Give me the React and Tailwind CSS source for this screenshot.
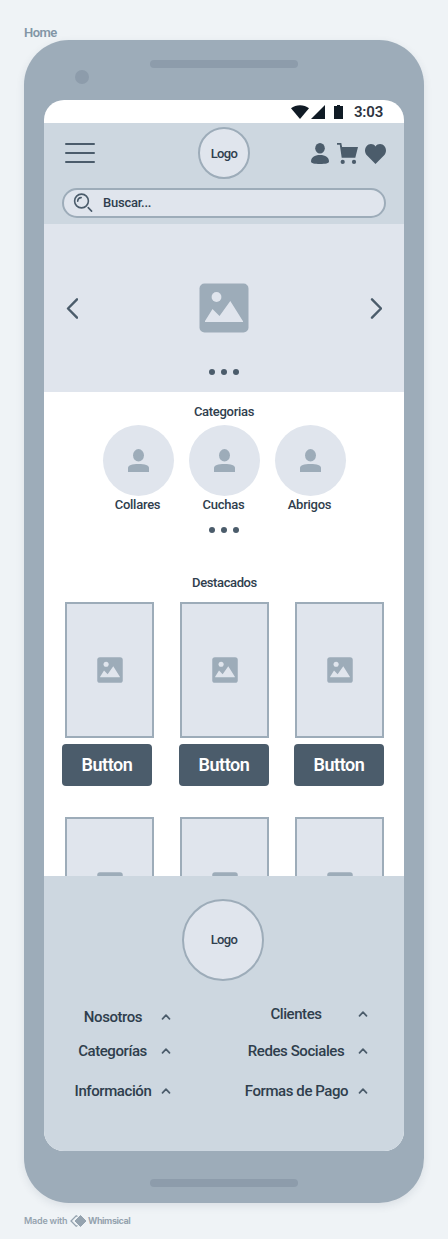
const PersonIcon = ({ className }) => (
  <svg className={className} viewBox="0 0 18 21" fill="currentColor" preserveAspectRatio="none">
    <ellipse cx="9" cy="5.2" rx="4.8" ry="5.2" />
    <path d="M0 18.500C0 14.500 3.500 12 9 12s9 2.500 9 6.500c0 1.800-3.500 2.500-9 2.500s-9-.7-9-2.500Z" />
  </svg>
);

const BustIcon = () => (
  <svg className="h-[23px] w-[21px] text-[#9dacb9]" viewBox="0 0 21 23" fill="currentColor">
    <ellipse cx="10.500" cy="6.300" rx="5.500" ry="6.200" />
    <path d="M0 23v-4c0-2.800 4-4 10.500-4S21 16.200 21 19v4Z" />
  </svg>
);

const CartIcon = () => (
  <svg className="h-[21px] w-[21px]" viewBox="0 0 21 21" fill="currentColor">
    <path d="M0 0h4.300l.8 4H21l-2.700 10.800H4.700L2.800 1.800H0Z" />
    <circle cx="5.700" cy="18.900" r="2.100" />
    <circle cx="17" cy="18.900" r="2.100" />
  </svg>
);

const HeartIcon = () => (
  <svg className="h-[20px] w-[21px]" viewBox="0 0 21 20" fill="currentColor">
    <path d="M10.500 20 1.600 10.900C-.5 8.700-.5 4.700 1.500 2.200 3.800-.6 8.300-.7 10.500 2.500 12.700-.7 17.200-.6 19.500 2.200c2 2.500 2 6.500-.1 8.700Z" />
  </svg>
);

const ImageIcon = ({ className }) => (
  <svg className={className} viewBox="0 0 50 50">
    <rect x=".5" y=".5" width="49" height="49" rx="5" fill="#9dacb9" />
    <circle cx="17.500" cy="14" r="4.900" fill="#e0e5ed" />
    <path d="m6 38 7.500-12 7 7L31.300 18 44 38.200v.8H6Z" fill="#e0e5ed" />
  </svg>
);

const Chevron = ({ flip }) => (
  <svg className="h-[22px] w-[12px]" viewBox="0 0 12 22" fill="none" stroke="#4b5c6b" strokeWidth="2.400" strokeLinecap="round" strokeLinejoin="round">
    <path d={flip ? "m2 2.300 9 9.200-9 9.200" : "m11 2.300-9 9.200 9 9.200"} />
  </svg>
);

const Caret = () => (
  <svg className="h-[6px] w-[10px] shrink-0" viewBox="0 0 10 6" fill="none" stroke="#4b5c6b" strokeWidth="1.700" strokeLinecap="round" strokeLinejoin="round">
    <path d="m1.500 4.800 3.500-3.600 3.500 3.600" />
  </svg>
);

const Dots = () => (
  <div className="flex justify-center gap-[6px]">
    {[0, 1, 2].map((i) => (
      <i key={i} className="size-[6px] rounded-full bg-[#4b5c6b]" />
    ))}
  </div>
);

const Card = () => (
  <div className="flex h-[136px] w-[89px] shrink-0 items-center justify-center border-2 border-[#9dacb9] bg-[#e0e5ed] pb-px">
    <ImageIcon className="size-[26px]" />
  </div>
);

const FooterLink = ({ label, width, offset = "" }) => (
  <div className={`flex h-[20px] items-center justify-between ${offset}`}>
    <span className={`flex justify-center whitespace-nowrap ${width}`}>{label}</span>
    <Caret />
  </div>
);

const categories = ["Collares", "Cuchas", "Abrigos"];

export default function App() {
  return (
    <main className="h-[1239px] w-[448px] overflow-hidden bg-[#eff3f6] px-6 font-['Roboto','Liberation_Sans',sans-serif] text-[13px] font-medium text-[#2f3e4d]">
      <div className="h-10 pt-[24px] text-[13px] leading-[18px] font-semibold tracking-[-0.500px] text-[#8296a6]">Home</div>

      <section className="h-[1163px] rounded-[45px] bg-[#9dacb9] px-5 shadow-[0_3px_8px_rgba(40,60,80,0.100)]">
        <div className="flex h-[60px] items-start pt-5">
          <div className="mt-[10px] ml-[31px] size-[14px] rounded-full bg-[#8d9cab]" />
          <div className="ml-[61px] h-2 w-[148px] rounded-full bg-[#8d9cab]" />
        </div>

        <div className="h-[1051px] overflow-hidden rounded-[20px] bg-white">
          <div className="flex h-[23px] items-start pl-[247px] text-[#101b25]">
            <svg className="mt-[5px] h-[14px] w-[18px]" viewBox="0 0 18 14" fill="currentColor"><path d="M0 3.200C5-.9 13-.9 18 3.200L9 14Z" /></svg>
            <svg className="mt-[5px] ml-[2px] h-[14px] w-[14px]" viewBox="0 0 14 14" fill="currentColor"><path d="M14 0v14H0Z" /></svg>
            <svg className="mt-[5px] ml-[9px] h-[14px] w-[9px]" viewBox="0 0 9 14" fill="currentColor"><path d="M3 0h3v1h3v13H0V1h3Z" /></svg>
            <span className="mt-[3px] ml-[11px] text-[15px] leading-[18px] font-semibold tracking-[-0.200px] text-[#2e3440]">3:03</span>
          </div>

          <header className="h-[101px] bg-[#cdd7e0] px-[18px] pt-1">
            <div className="flex h-[52px] items-center text-[#4b5c6b]">
              <div className="ml-[3px] flex w-[30px] flex-col gap-[7px]">
                <i className="h-[2px] rounded-full bg-current" />
                <i className="h-[2px] rounded-full bg-current" />
                <i className="h-[2px] rounded-full bg-current" />
              </div>
              <div className="ml-[103px] flex size-[52px] items-center justify-center rounded-full border-2 border-[#9dacb9] bg-[#e0e5ed] pt-[1px] text-[13px] tracking-[-0.600px] text-[#2f3e4d]">Logo</div>
              <div className="ml-[61px] flex items-end gap-[8px]">
                <PersonIcon className="h-[21px] w-[18px]" />
                <CartIcon />
                <div className="-ml-[1px]"><HeartIcon /></div>
              </div>
            </div>
            <div className="mt-[9px] flex h-[30px] items-center rounded-full border-2 border-[#9dacb9] bg-[#e0e5ed] pl-[9px]">
              <svg className="size-[20px]" viewBox="0 0 20 20" fill="none" stroke="#4b5c6b" strokeWidth="1.600" strokeLinecap="round">
                <circle cx="8.500" cy="8" r="6.900" />
                <path d="M4.700 8.300c.1-2.300 1.600-3.600 3.500-3.700M15.200 14.600l3.400 3.500" />
              </svg>
              <span className="ml-[10px] tracking-[-0.250px]">Buscar...</span>
            </div>
          </header>

          <section className="flex h-[168px] flex-col bg-[#e0e5ed] pt-[59px]">
            <div className="flex h-[50px] items-center justify-between px-[22px]">
              <Chevron />
              <ImageIcon className="size-[50px]" />
              <Chevron flip />
            </div>
            <div className="mt-[36px]"><Dots /></div>
          </section>

          <section className="h-[484px] overflow-hidden">
            <h2 className="pt-[11px] text-center leading-[18px] tracking-[-0.300px]">Categorias</h2>
            <div className="mt-[4px] flex justify-center gap-[15px] pl-[1px]">
              {categories.map((name) => (
                <div key={name} className="w-[71px]">
                  <div className="flex h-[71px] items-center justify-center rounded-full bg-[#e0e5ed]"><BustIcon /></div>
                  <div className="pr-[2px] text-center leading-[18px] tracking-[-0.250px]">{name}</div>
                </div>
              ))}
            </div>
            <div className="mt-[13px]"><Dots /></div>
            <h2 className="mt-[41px] pl-px text-center leading-[18px] tracking-[-0.380px]">Destacados</h2>
            <div className="mt-[10px] flex gap-[26px] pl-[21px]"><Card /><Card /><Card /></div>
            <div className="mt-[6px] flex pl-[18px] text-[18px] font-semibold tracking-[-0.450px] text-white">
              <button className="h-[42px] w-[90px] rounded bg-[#4b5c6b] pb-[1px]">Button</button>
              <button className="ml-[27px] h-[42px] w-[90px] rounded bg-[#4b5c6b] pb-[1px]">Button</button>
              <button className="ml-[25px] h-[42px] w-[90px] rounded bg-[#4b5c6b] pb-[1px]">Button</button>
            </div>
            <div className="mt-[31px] flex gap-[26px] pl-[21px]"><Card /><Card /><Card /></div>
          </section>

          <footer className="h-[275px] bg-[#cdd7e0] pt-[23px]">
            <div className="ml-[138px] flex size-[82px] items-center justify-center rounded-full border-2 border-[#9dacb9] bg-[#e0e5ed] pl-[2px] tracking-[-0.600px]">Logo</div>
            <div className="flex pl-[29px] text-[15px] leading-[20px] font-medium tracking-[-0.420px]">
              <div className="w-[98px] pt-[26px]">
                <FooterLink label="Nosotros" width="w-[80px]" />
                <FooterLink label="Categorías" width="w-[79px]" offset="mt-[14px]" />
                <FooterLink label="Información" width="w-[80px]" offset="mt-[20px]" />
              </div>
              <div className="ml-[72px] w-[125px] pt-[23px]">
                <FooterLink label="Clientes" width="w-[106px]" />
                <FooterLink label="Redes Sociales" width="w-[106px]" offset="mt-[17px]" />
                <FooterLink label="Formas de Pago" width="w-[107px]" offset="mt-[20px]" />
              </div>
            </div>
          </footer>
        </div>
        <div className="mx-auto mt-[28px] h-2 w-[148px] rounded-full bg-[#8d9cab]" />
      </section>

      <div className="mt-[11px] flex h-[14px] items-center font-['Inter','Liberation_Sans',sans-serif] text-[9px] font-semibold text-[#95a3af]">
        <span className="w-[43px] tracking-[-0.220px] whitespace-nowrap">Made with</span>
        <svg className="ml-[3px] h-[12px] w-[17px]" viewBox="0 0 17 12">
          <path d="M7.500 1.500 6.200.8 1 6l5.200 5.200 1.300-.7" fill="none" stroke="currentColor" strokeWidth="1.300" />
          <path d="m10.500.5 5.500 5.500-5.500 5.500L5 6Z" fill="currentColor" stroke="currentColor" strokeLinejoin="round" />
        </svg>
        <span className="ml-[1px] font-bold tracking-[-0.420px]">Whimsical</span>
      </div>
    </main>
  );
}
